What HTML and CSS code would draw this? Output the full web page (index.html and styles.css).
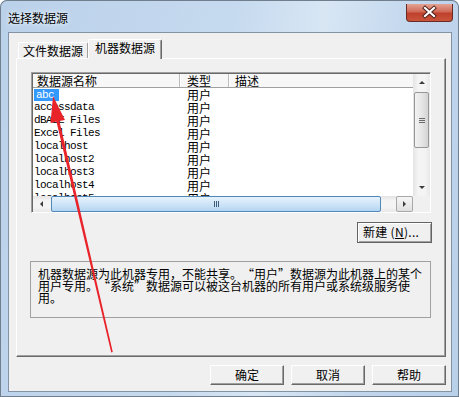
FILE: index.html
```html
<!DOCTYPE html>
<html>
    <head>
        <title>选择数据源</title>
        <link rel="stylesheet" href="styles.css">
    </head>
    <body>
        <div class='window'>
            <div class='titlebar'>
                <span class='title'>选择数据源</span>
                <div class='close'>
                    <svg width='47' height='18' viewBox='0 0 47 18'>
                        <path d='M19 5 L28 13 M28 5 L19 13' stroke='#4a1c18' stroke-width='4' stroke-linecap='square'/>
                        <path d='M19 5 L28 13 M28 5 L19 13' stroke='#fff' stroke-width='2.2' stroke-linecap='square'/>
                    </svg>
                </div>
            </div>
            <div class='client'>
                <div class='tabs'>
                    <div class='tab'>文件数据源</div>
                    <div class='tab active'>机器数据源</div>
                </div>
                <div class='panel'>
                    <div class='listbox'>
                        <div class='list-area'>
                            <div class='row header'>
                                <div class='cell name'>数据源名称</div>
                                <div class='cell type'>类型</div>
                                <div class='cell desc-col'>描述</div>
                            </div>
                            <div class='row'><div class='cell name'><span class='sel'>abc</span></div><div class='cell type'>用户</div></div>
                            <div class='row'><div class='cell name'>accessdata</div><div class='cell type'>用户</div></div>
                            <div class='row'><div class='cell name'>dBASE Files</div><div class='cell type'>用户</div></div>
                            <div class='row'><div class='cell name'>Excel Files</div><div class='cell type'>用户</div></div>
                            <div class='row'><div class='cell name'>localhost</div><div class='cell type'>用户</div></div>
                            <div class='row'><div class='cell name'>localhost2</div><div class='cell type'>用户</div></div>
                            <div class='row'><div class='cell name'>localhost3</div><div class='cell type'>用户</div></div>
                            <div class='row'><div class='cell name'>localhost4</div><div class='cell type'>用户</div></div>
                            <div class='row'><div class='cell name'>localhost5</div><div class='cell type'>用户</div></div>
                        </div>
                        <div class='vscroll'>
                            <div class='arrow-btn'><span class='tri up'></span></div>
                            <div class='vthumb'><span></span><span></span><span></span></div>
                            <div class='track'></div>
                            <div class='arrow-btn'><span class='tri down'></span></div>
                        </div>
                        <div class='hscroll'>
                            <div class='arrow-btn'><span class='tri left'></span></div>
                            <div class='hthumb'><span></span><span></span><span></span></div>
                            <div class='track'></div>
                            <div class='arrow-btn hover'><span class='tri right'></span></div>
                        </div>
                        <div class='corner'></div>
                    </div>
                    <div class='new-row'>
                        <div class='btn btn-new'>新建 (<u>N</u>)...</div>
                    </div>
                    <div class='desc'>
                        机器数据源为此机器专用，不能共享。<span class='q'>“</span>用户<span class='q'>”</span>数据源为此机器上的某个<br>
                        用户专用。<span class='q'>“</span>系统<span class='q'>”</span>数据源可以被这台机器的所有用户或系统级服务使<br>
                        用。
                    </div>
                </div>
                <div class='buttons'>
                    <div class='btn'>确定</div>
                    <div class='btn'>取消</div>
                    <div class='btn'>帮助</div>
                </div>
            </div>
            <svg class='pointer' width='459' height='397' viewBox='0 0 459 397'>
                <polygon points='53,96 65,120 59.4,121 112.8,352 111.2,352.4 56.4,121.6 50.5,123' fill='#e8232a'/>
            </svg>
        </div>
    </body>
</html>
```
FILE: styles.css
```css
body
{
    margin: 0;
    font: 12px "Noto Sans CJK SC", sans-serif;
    color: #000;
}

.window
{
    position: relative;
    width: 459px;
    height: 397px;
    display: flex;
    flex-direction: column;
    background: linear-gradient(100deg, #bad1ea 0%, #c6daef 45%, #d8e6f4 62%, #c1d6ed 80%, #b9d0e9 100%);
    border-radius: 7px 7px 0 0;
    box-shadow: inset 0 0 0 1px #707e8e;
    overflow: hidden;
}

.titlebar
{
    height: 32px;
    display: flex;
    align-items: flex-start;
    padding-left: 8px;
}

.title
{
    padding-top: 11px;
    line-height: 14px;
    text-shadow: 0 0 6px #eef5fc, 0 0 3px #eef5fc;
}

.close
{
    margin: 4px 6px 0 auto;
    width: 47px;
    height: 18px;
    box-sizing: border-box;
    border: 1px solid #6a2a24;
    border-top: none;
    border-radius: 0 0 4px 4px;
    background: linear-gradient(to bottom, #e4a393 0%, #d06a58 45%, #c0402c 55%, #c9543c 100%);
    overflow: hidden;
}

.close svg
{
    display: block;
    margin: -1px 0 0 -1px;
}

.client
{
    flex: 1;
    margin: 0 7px 5px 8px;
    background: #f0f0f0;
    border: 1px solid #8392a4;
    padding: 6px 5px 0 7px;
    display: flex;
    flex-direction: column;
}

.tabs
{
    display: flex;
    align-items: flex-end;
    height: 19px;
    margin-left: 2px;
    position: relative;
    z-index: 1;
}

.tab
{
    box-sizing: border-box;
    width: 70px;
    height: 16px;
    padding-left: 4px;
    line-height: 15px;
    border: 1px solid;
    border-color: #fff #a0a0a0 transparent #fff;
    border-bottom: none;
    border-radius: 2px 2px 0 0;
    background: #f0f0f0;
}

.tab.active
{
    width: 74px;
    height: 20px;
    margin-bottom: -1px;
    padding-left: 6px;
    line-height: 16px;
    border-right-color: #696969;
    box-shadow: inset -1px 0 #a0a0a0;
}

.panel
{
    box-sizing: border-box;
    height: 299px;
    border: 1px solid;
    border-color: #fff #696969 #696969 #fff;
    box-shadow: inset -1px -1px #a0a0a0;
    padding: 13px 14px 0 14px;
    display: flex;
    flex-direction: column;
}

.listbox
{
    box-sizing: border-box;
    height: 141px;
    border: 1px solid;
    border-color: #a0a0a0 #fff #fff #a0a0a0;
    box-shadow: inset 1px 1px #696969;
    padding: 1px 0 0 1px;
    background: #fff;
    display: grid;
    grid-template-columns: 380px 17px;
    grid-template-rows: 122px 16px;
}

.list-area
{
    overflow: hidden;
    background: #fff;
}

.row
{
    display: flex;
    height: 13px;
    line-height: 13px;
    white-space: nowrap;
}

.row.header
{
    height: 14px;
    box-sizing: border-box;
    border-bottom: 1px solid #a0a0a0;
    background: #f7f7f7;
}

.cell
{
    box-sizing: border-box;
}

.name
{
    width: 147px;
    padding-left: 1px;
    font: 11px "Liberation Mono", monospace;
    letter-spacing: -0.6px;
    line-height: 13px;
}

.type
{
    width: 49px;
    padding-left: 7px;
}

.header .cell
{
    font: 12px "Noto Sans CJK SC", sans-serif;
    letter-spacing: 0;
    line-height: 13px;
    border-right: 1px solid #bcbcbc;
    box-shadow: 1px 0 #fff;
}

.header .name
{
    padding-left: 4px;
}

.header .desc-col
{
    flex: 1;
    padding-left: 6px;
    border-right: none;
}

.sel
{
    display: inline-block;
    height: 12px;
    margin-top: 1px;
    line-height: 12px;
    padding: 0 5px 0 2px;
    background: #3399ff;
    color: #fff;
}

.vscroll
{
    display: flex;
    flex-direction: column;
    background: linear-gradient(to right, #e4e4e4, #f4f4f4 30%, #f4f4f4 70%, #e8e8e8);
}

.hscroll
{
    display: flex;
    background: linear-gradient(to bottom, #e4e4e4, #f4f4f4 30%, #f4f4f4 70%, #e8e8e8);
}

.corner
{
    background: #f0f0f0;
}

.arrow-btn
{
    flex: none;
    width: 17px;
    height: 17px;
    display: flex;
    align-items: center;
    justify-content: center;
}

.hscroll .arrow-btn
{
    height: 16px;
}

.arrow-btn.hover
{
    box-sizing: border-box;
    border: 1px solid #a8a8a8;
    border-radius: 2px;
    background: linear-gradient(to bottom, #f6f6f6, #e0e0e0);
}

.tri
{
    width: 0;
    height: 0;
    border: 3px solid transparent;
}

.tri.up
{
    border-bottom: 3px solid #3c3c3c;
    border-top-width: 0;
}

.tri.down
{
    border-top: 3px solid #3c3c3c;
    border-bottom-width: 0;
}

.tri.left
{
    border-right: 3px solid #3c3c3c;
    border-left-width: 0;
}

.tri.right
{
    border-left: 3px solid #3c3c3c;
    border-right-width: 0;
}

.track
{
    flex: 1;
}

.vthumb
{
    flex: none;
    height: 56px;
    margin: 1px 1px 0 1px;
    box-sizing: border-box;
    border: 1px solid #979797;
    border-radius: 2px;
    background: linear-gradient(to right, #f2f2f2, #e6e6e6 50%, #d4d4d4);
    display: flex;
    flex-direction: column;
    align-items: center;
    justify-content: center;
    gap: 1px;
}

.vthumb span
{
    width: 6px;
    height: 1px;
    background: #6b6b6b;
}

.hthumb
{
    flex: none;
    width: 330px;
    margin-left: 1px;
    box-sizing: border-box;
    border: 1px solid #4f87b8;
    border-radius: 2px;
    background: linear-gradient(to bottom, #e6f2fc, #cfe5f8 50%, #b4d5f1);
    display: flex;
    align-items: center;
    justify-content: center;
    gap: 1px;
}

.hthumb span
{
    width: 1px;
    height: 6px;
    background: #3d5d7c;
}

.new-row
{
    display: flex;
    justify-content: flex-end;
    margin: 9px -1px 0 0;
}

.btn
{
    box-sizing: border-box;
    width: 74px;
    height: 20px;
    border: 1px solid;
    border-color: #fff #696969 #696969 #fff;
    box-shadow: inset -1px -1px #a0a0a0;
    background: #f0f0f0;
    text-align: center;
    line-height: 17px;
}

.btn-new
{
    width: 75px;
    height: 21px;
    border: 1px solid #646464;
    box-shadow: inset 1px 1px #fff, inset -1px -1px #a0a0a0;
    text-align: left;
    padding-left: 5px;
    line-height: 18px;
    letter-spacing: 0.3px;
}

.btn-new u
{
    text-underline-offset: 1px;
}

.desc
{
    box-sizing: border-box;
    height: 57px;
    margin: 18px 0 0 -1px;
    border: 1px solid #a0a0a0;
    padding: 6px 0 0 7px;
    line-height: 12px;
    white-space: nowrap;
}

.q
{
    display: inline-block;
    width: 12px;
    text-align: center;
}

.buttons
{
    display: flex;
    justify-content: flex-end;
    gap: 7px;
    margin-top: 8px;
}

.pointer
{
    position: absolute;
    left: 0;
    top: 0;
    pointer-events: none;
}
```
